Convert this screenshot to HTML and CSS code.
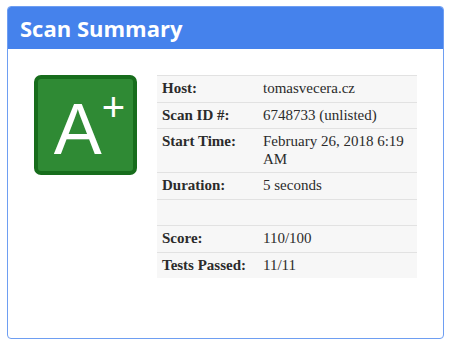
FILE: index.html
```html
<!DOCTYPE html>
<html lang="en">
<head>
    <meta charset="UTF-8">
    <meta name="viewport" content="width=device-width, initial-scale=1.0">
    <title>Scan Summary</title>
    <link rel="stylesheet" href="styles.css">
</head>
<body>
    <div class="panel">
        <div class="panel-heading">
            <h3 class="panel-title">Scan Summary</h3>
        </div>
        <div class="panel-body">
            <div class="grade">
                <span class="grade-letter">A</span><span class="grade-mod">+</span>
            </div>
            <table class="summary">
                <tr>
                    <th>Host:</th>
                    <td>tomasvecera.cz</td>
                </tr>
                <tr>
                    <th>Scan ID #:</th>
                    <td>6748733 (unlisted)</td>
                </tr>
                <tr>
                    <th>Start Time:</th>
                    <td>February 26, 2018 6:19 AM</td>
                </tr>
                <tr>
                    <th>Duration:</th>
                    <td>5 seconds</td>
                </tr>
                <tr>
                    <th>&nbsp;</th>
                    <td></td>
                </tr>
                <tr>
                    <th>Score:</th>
                    <td>110/100</td>
                </tr>
                <tr>
                    <th>Tests Passed:</th>
                    <td>11/11</td>
                </tr>
            </table>
        </div>
    </div>
</body>
</html>
```

FILE: styles.css
```css
body {
    margin: 0;
    padding: 6px 6px 0 7px;
    background-color: #fff;
    font-family: "Liberation Serif", serif;
}
.panel {
    width: 437px;
    height: 333px;
    box-sizing: border-box;
    border: 1px solid #6e9ef2;
    border-radius: 4px;
    overflow: hidden;
}
.panel-heading {
    background-color: #4582ec;
    height: 42px;
    padding: 0 12px;
    display: flex;
    align-items: center;
}
.panel-title {
    margin: 0;
    color: #fff;
    font-family: "Open Sans", sans-serif;
    font-weight: 700;
    font-size: 22px;
}
.panel-body {
    display: flex;
    align-items: flex-start;
    gap: 20px;
    padding: 26px 26px 0 26px;
}
.grade {
    width: 103px;
    height: 100px;
    flex: none;
    box-sizing: border-box;
    background-color: #2f8a34;
    border: 4px solid #176d1c;
    border-radius: 7px;
    color: #fff;
    font-family: "Liberation Sans", sans-serif;
    display: flex;
    justify-content: center;
    align-items: center;
    padding-left: 8px;
}
.grade-letter {
    font-size: 72px;
    line-height: 1;
    margin-top: 8px;
}
.grade-mod {
    font-size: 40px;
    line-height: 1;
    align-self: flex-start;
    margin-top: 8px;
}
.summary {
    flex: 1;
    border-collapse: collapse;
    font-size: 15px;
    color: #2b2b2b;
}
.summary tr {
    background-color: #f7f7f7;
    border-top: 1px solid #e2e2e2;
}
.summary th,
.summary td {
    text-align: left;
    vertical-align: top;
    padding: 4px 5px;
    line-height: 17.5px;
}
.summary th {
    width: 91px;
    font-weight: 700;
}
```
